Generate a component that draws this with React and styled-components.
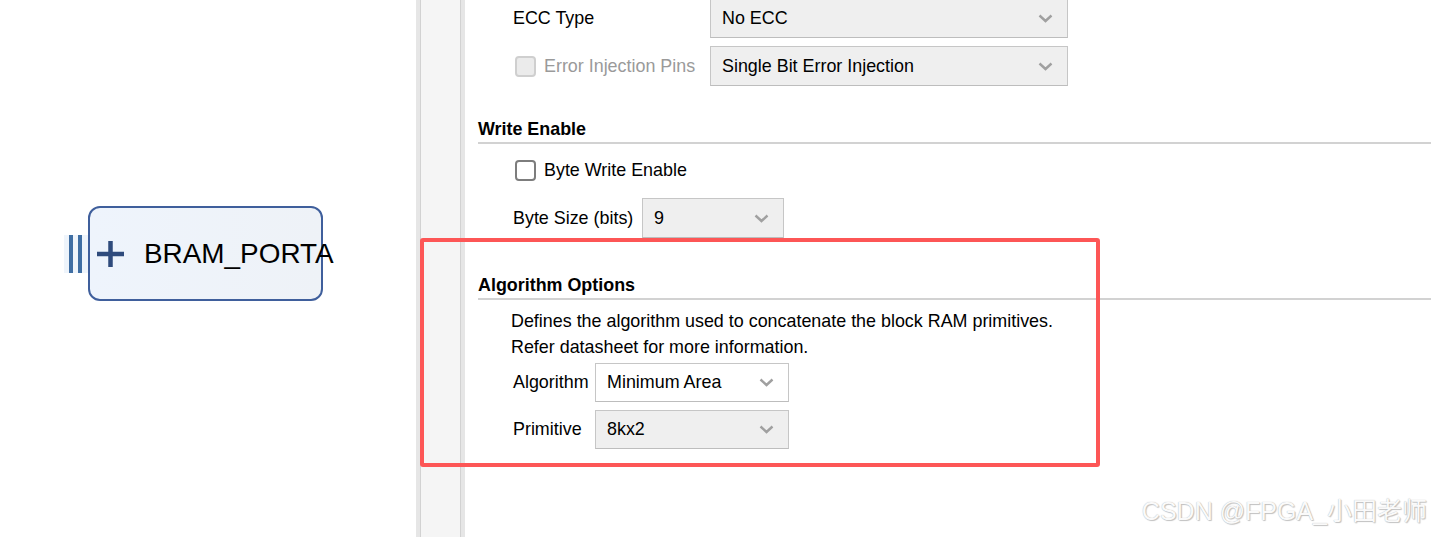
import React from "react";
import styled, { createGlobalStyle } from "styled-components";

const GlobalStyle = createGlobalStyle`
  html, body {
    margin: 0;
    padding: 0;
    background: #ffffff;
  }
  body {
    font-family: "Liberation Sans", Arial, sans-serif;
    color: #000;
  }
`;

const Page = styled.div`
  position: relative;
  display: flex;
  width: 1431px;
  height: 537px;
  overflow: hidden;
  background: #fff;
`;

const Canvas = styled.div`
  position: relative;
  width: 416px;
  flex-shrink: 0;
  background: #fff;
`;

const Node = styled.div`
  position: absolute;
  left: ${({ x }) => x}px;
  top: ${({ y }) => y}px;
  display: flex;
  align-items: center;
`;

const Pins = styled.div`
  display: flex;
  gap: 5px;
  height: 38px;
  margin-top: 1px;
  padding: 0 6px 0 5px;
  background: #eef4fb;
  span {
    width: 4px;
    background: #3f6ea3;
  }
`;

const Block = styled.div`
  width: 235px;
  height: 95px;
  box-sizing: border-box;
  border: 2px solid #3f5f9c;
  border-radius: 12px;
  background: linear-gradient(90deg, #eef4fc, #eef2f7);
  display: flex;
  align-items: center;
  padding-left: 7px;
  gap: 19px;
  overflow: visible;
  white-space: nowrap;
  svg {
    flex-shrink: 0;
  }
`;

const BlockName = styled.span`
  font-size: 27.9px;
  color: #000;
  margin-top: 1px;
`;

const Gutter = styled.div`
  width: 49px;
  flex-shrink: 0;
  box-sizing: border-box;
  background: #f5f5f5;
  border-left: 4px solid #e6e6e6;
  border-right: 4px solid #e6e6e6;
  box-shadow: inset 1px 0 0 #d2d2d2, inset -1px 0 0 #d2d2d2;
`;

const Panel = styled.div`
  flex: 1;
  padding-left: 13px;
  font-size: 17.9px;
`;

const Inner = styled.div`
  margin-top: -2px;
`;

const Row = styled.div`
  display: flex;
  align-items: center;
  height: ${({ h }) => h || 40}px;
  margin-top: ${({ mt }) => mt || 0}px;
  padding-left: ${({ indent }) => indent || 35}px;
`;

const Label = styled.span`
  width: ${({ w }) => w}px;
  flex-shrink: 0;
  color: ${({ disabled }) => (disabled ? "#9a9a9a" : "#000")};
  display: flex;
  align-items: center;
  gap: 8px;
  white-space: nowrap;
`;

const Box = styled.span`
  width: 21px;
  height: 21px;
  flex-shrink: 0;
  box-sizing: border-box;
  border-radius: 4px;
  border: 2px solid ${({ disabled }) => (disabled ? "#cfcfcf" : "#7d7d7d")};
  background: ${({ disabled }) => (disabled ? "#ebebeb" : "#fff")};
  margin-left: 2px;
`;

const Select = styled.div`
  width: ${({ w }) => w}px;
  height: 100%;
  box-sizing: border-box;
  border: 1px solid #c6c6c6;
  border-bottom-color: #bdbdbd;
  background: ${({ light }) => (light ? "#ffffff" : "#efefef")};
  display: flex;
  align-items: center;
  justify-content: space-between;
  padding: 0 14px 0 11px;
  color: #000;
  white-space: nowrap;
`;

const Chevron = () => (
  <svg width="15" height="9" viewBox="0 0 15 9">
    <path d="M1.5 1.5 L7.5 7 L13.5 1.5" fill="none" stroke="#a0a0a0" strokeWidth="2.4" />
  </svg>
);

const Header = styled.div`
  margin-top: ${({ mt }) => mt}px;
  font-weight: bold;
  line-height: 20px;
  padding-bottom: 3px;
  border-bottom: 2px solid #d2d2d2;
`;

const Desc = styled.div`
  margin-top: 8px;
  padding-left: 33px;
  line-height: 26px;
`;

const Highlight = styled.div`
  position: absolute;
  left: 420px;
  top: 238px;
  width: 680px;
  height: 229px;
  box-sizing: border-box;
  border: 4px solid #fd5656;
  border-radius: 3px;
  pointer-events: none;
`;

const Watermark = styled.div`
  position: absolute;
  right: 4px;
  bottom: 10px;
  font-family: "Liberation Sans", "Noto Sans CJK SC", sans-serif;
  font-size: 25px;
  color: #fafafa;
  text-shadow: 0 0 1px #a8a8a8, 1px 1px 1px #c4c4c4;
  white-space: nowrap;
`;

const Field = ({ label, w, selW, value, light, h, mt, disabled, check }) => (
  <Row h={h} mt={mt}>
    <Label w={w} disabled={disabled}>
      {check && <Box disabled={disabled} />}
      {label}
    </Label>
    <Select w={selW} light={light}>
      {value}
      <Chevron />
    </Select>
  </Row>
);

export default function App() {
  return (
    <>
      <GlobalStyle />
      <Page>
        <Canvas>
          <Node x={64} y={206}>
            <Pins>
              <span />
              <span />
            </Pins>
            <Block>
              <svg width="28" height="28" viewBox="0 0 28 28">
                <path d="M0 14 H27 M13.5 1 V27" stroke="#2f4b7c" strokeWidth="4.5" />
              </svg>
              <BlockName>BRAM_PORTA</BlockName>
            </Block>
          </Node>
        </Canvas>
        <Gutter />
        <Panel>
          <Inner>
            <Field label="ECC Type" w={197} selW={358} value="No ECC" h={40} />
            <Field
              label="Error Injection Pins"
              w={197}
              selW={358}
              value="Single Bit Error Injection"
              h={40}
              mt={8}
              disabled
              check
            />
            <Header mt={33}>Write Enable</Header>
            <Row h={24} mt={14}>
              <Label w={300}>
                <Box />
                Byte Write Enable
              </Label>
            </Row>
            <Field label="Byte Size (bits)" w={129} selW={142} value="9" h={40} mt={16} />
            <Header mt={37}>Algorithm Options</Header>
            <Desc>
              Defines the algorithm used to concatenate the block RAM primitives.
              <br />
              Refer datasheet for more information.
            </Desc>
            <Field label="Algorithm" w={82} selW={194} value="Minimum Area" h={39} mt={3} light />
            <Field label="Primitive" w={82} selW={194} value="8kx2" h={39} mt={8} />
          </Inner>
        </Panel>
        <Highlight />
        <Watermark>CSDN @FPGA_小田老师</Watermark>
      </Page>
    </>
  );
}
